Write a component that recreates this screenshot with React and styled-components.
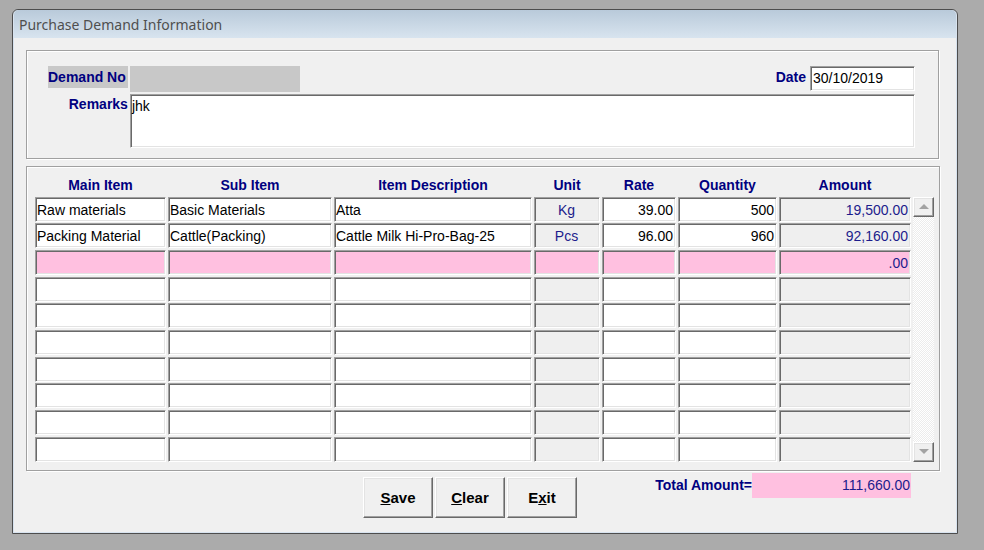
import React from 'react';
import styled, { createGlobalStyle } from 'styled-components';

const GlobalStyle = createGlobalStyle`
  html, body {
    margin: 0;
    padding: 0;
    background: #ababab;
    height: 550px;
    overflow: hidden;
  }
`;

const NAVY = '#000080';
const BLUE = '#1c1c8c';

const Window = styled.div`
  margin: 9px 0 0 12px;
  width: 946px;
  height: 525px;
  box-sizing: border-box;
  border: 1px solid #4d4d4d;
  border-radius: 6px 6px 0 0;
  padding: 0 1px 1px 1px;
  background: #d8e3ef;
  display: flex;
  flex-direction: column;
  overflow: hidden;
  font-family: "Liberation Sans", Arial, sans-serif;
  font-size: 14px;
`;

const TitleBar = styled.div`
  height: 28px;
  flex-shrink: 0;
  background: linear-gradient(#b9cada, #d8e4ef);
  display: flex;
  align-items: center;
  padding-left: 5px;
  color: #4f4f4f;
  font-family: "Noto Sans", "Open Sans", sans-serif;
  font-size: 14px;
  border-radius: 5px 5px 0 0;
`;

const Body = styled.div`
  flex: 1;
  background: #f0f0f0;
  display: flex;
  flex-direction: column;
  padding: 12px 0 0 12px;
`;

const GroupBox = styled.div`
  box-sizing: border-box;
  width: ${p => p.$width}px;
  border: 1px solid #a0a0a0;
  box-shadow: inset 1px 1px 0 #fff, 1px 1px 0 #fff;
  padding: ${p => p.$pad};
  margin-bottom: ${p => p.$mb || 0}px;
`;

const FieldRow = styled.div`
  display: flex;
  align-items: flex-start;
  margin-top: ${p => p.$mt || 0}px;
`;

const Label = styled.div`
  color: ${NAVY};
  font-weight: bold;
  white-space: nowrap;
  width: ${p => (p.$width ? `${p.$width}px` : 'auto')};
  text-align: ${p => p.$align || 'left'};
  background: ${p => p.$bg || 'transparent'};
  height: ${p => p.$h || 22}px;
  line-height: ${p => p.$h || 22}px;
  margin-right: ${p => p.$mr ?? 2}px;
`;

const GreyField = styled.div`
  width: 170px;
  height: 26px;
  background: #c8c8c8;
`;

const Input = styled.div`
  box-sizing: border-box;
  width: ${p => p.$w}px;
  height: ${p => p.$h}px;
  background: #fff;
  border-style: solid;
  border-width: 1px;
  border-color: #a0a0a0 #fff #fff #a0a0a0;
  box-shadow: inset 1px 1px 0 #696969, inset -1px -1px 0 #e3e3e3;
  padding: ${p => p.$pad || '0 2px'};
  line-height: ${p => p.$lh || 23}px;
  color: #000;
`;

const Spacer = styled.div`
  flex: 1;
`;

const Table = styled.div`
  display: grid;
  grid-template-columns: 131px 164px 198px 66px 74px 99px 132px 21px;
  grid-template-rows: 20px repeat(10, 25px);
  column-gap: 2px;
  row-gap: 1.67px;
`;

const Head = styled.div`
  color: ${NAVY};
  font-weight: bold;
  text-align: center;
  line-height: 20px;
  white-space: nowrap;
`;

const Cell = styled.div`
  box-sizing: border-box;
  background: ${p => p.$bg};
  border-style: solid;
  border-width: 1px;
  border-color: #a0a0a0 #fff #fff #a0a0a0;
  box-shadow: inset 1px 1px 0 #696969, inset -1px -1px 0 #e3e3e3;
  padding: 0 2px 0 1px;
  line-height: 24px;
  text-align: ${p => p.$align || 'left'};
  color: ${p => p.$color || '#000'};
  white-space: nowrap;
  overflow: hidden;
`;

const ScrollBar = styled.div`
  grid-column: 8;
  grid-row: 2 / span 10;
  display: flex;
  flex-direction: column;
  justify-content: space-between;
  background-color: #fff;
  background-image: repeating-conic-gradient(#ececec 0 25%, #fff 0 50%);
  background-size: 2px 2px;
`;

const ScrollButton = styled.div`
  box-sizing: border-box;
  height: 20px;
  background: #f0f0f0;
  border-style: solid;
  border-width: 1px;
  border-color: #fff #696969 #696969 #fff;
  box-shadow: inset -1px -1px 0 #a0a0a0, inset 1px 1px 0 #e3e3e3;
  display: flex;
  align-items: center;
  justify-content: center;
`;

const Arrow = styled.div`
  width: 0;
  height: 0;
  border-left: 5px solid transparent;
  border-right: 5px solid transparent;
  ${p => (p.$up ? 'border-bottom: 5px solid #a3a3a3;' : 'border-top: 5px solid #a3a3a3;')}
`;

const BottomBar = styled.div`
  display: flex;
  align-items: flex-start;
  padding-top: 2px;
`;

const Buttons = styled.div`
  display: flex;
  gap: 2px;
  margin: 4px 0 0 337px;
`;

const Button = styled.div`
  box-sizing: border-box;
  width: 70px;
  height: 41px;
  background: #f0f0f0;
  border-style: solid;
  border-width: 1px;
  border-color: #fff #696969 #696969 #fff;
  box-shadow: inset -1px -1px 0 #a0a0a0, inset 1px 1px 0 #e3e3e3;
  display: flex;
  align-items: center;
  justify-content: center;
  font-weight: bold;
  font-size: 15px;
  color: #000;
`;

const Total = styled.div`
  display: flex;
  align-items: center;
  margin-left: auto;
  margin-right: 45px;
`;

const TotalBox = styled.div`
  box-sizing: border-box;
  width: 159px;
  height: 25px;
  background: #ffc0e0;
  color: ${BLUE};
  text-align: right;
  line-height: 25px;
  padding-right: 1px;
`;

const PINK = '#ffc0e0';
const GREY = '#efefef';

const rows = [
  ['Raw materials', 'Basic Materials', 'Atta', 'Kg', '39.00', '500', '19,500.00'],
  ['Packing Material', 'Cattle(Packing)', 'Cattle Milk Hi-Pro-Bag-25', 'Pcs', '96.00', '960', '92,160.00'],
  ['', '', '', '', '', '', '.00'],
  ...Array.from({ length: 7 }, () => ['', '', '', '', '', '', '']),
];

const columns = [
  { title: 'Main Item' },
  { title: 'Sub Item' },
  { title: 'Item Description' },
  { title: 'Unit', bg: GREY, align: 'center', color: BLUE },
  { title: 'Rate', align: 'right' },
  { title: 'Quantity', align: 'right' },
  { title: 'Amount', bg: GREY, align: 'right', color: BLUE },
];

const App = () => {
  return (
    <>
      <GlobalStyle />
      <Window>
        <TitleBar>Purchase Demand Information</TitleBar>
        <Body>
          <GroupBox $width={913} $pad="15px 23px 10px 21px" $mb={7}>
            <FieldRow>
              <Label $bg="#c8c8c8" $width={80}>Demand No</Label>
              <GreyField />
              <Spacer />
              <Label $h={23} $mr={4}>Date</Label>
              <Input $w={105} $h={25}>30/10/2019</Input>
            </FieldRow>
            <FieldRow $mt={2}>
              <Label $width={80} $align="right" $h={21}>Remarks</Label>
              <Input $w={786} $h={54} $lh={23} $pad="0 1px">jhk</Input>
            </FieldRow>
          </GroupBox>

          <GroupBox $width={914} $pad="8px 5px 8px 8px">
            <Table>
              {columns.map(c => (
                <Head key={c.title}>{c.title}</Head>
              ))}
              <div />
              {rows.map((row, i) =>
                row.map((val, j) => {
                  const col = columns[j];
                  const bg = i === 2 ? PINK : col.bg || '#fff';
                  return (
                    <Cell key={`${i}-${j}`} $bg={bg} $align={col.align} $color={col.color}>
                      {val}
                    </Cell>
                  );
                })
              )}
              <ScrollBar>
                <ScrollButton><Arrow $up /></ScrollButton>
                <ScrollButton><Arrow /></ScrollButton>
              </ScrollBar>
            </Table>
          </GroupBox>

          <BottomBar>
            <Buttons>
              <Button><u>S</u>ave</Button>
              <Button><u>C</u>lear</Button>
              <Button>E<u>x</u>it</Button>
            </Buttons>
            <Total>
              <Label $h={25} $mr={0}>Total Amount=</Label>
              <TotalBox>111,660.00</TotalBox>
            </Total>
          </BottomBar>
        </Body>
      </Window>
    </>
  );
};

export default App;
